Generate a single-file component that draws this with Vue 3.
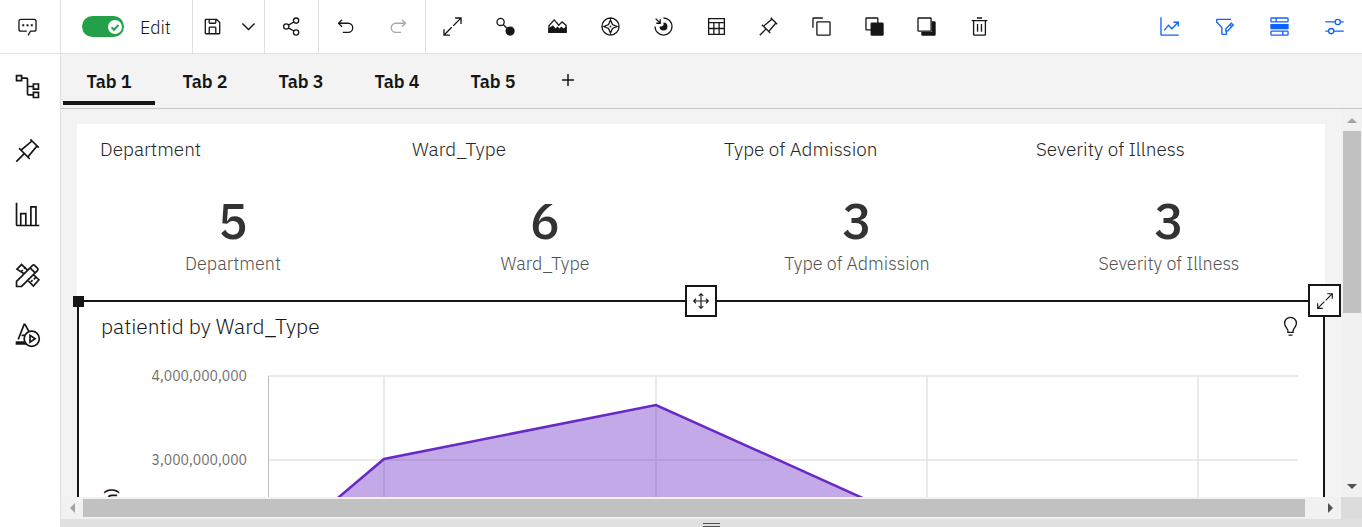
<script setup>
import { ref } from 'vue'

const editing = ref(true)
const activeTab = ref(0)
const tabs = ['Tab 1', 'Tab 2', 'Tab 3', 'Tab 4', 'Tab 5']
const kpis = [
  { name: 'Department', value: 5 },
  { name: 'Ward_Type', value: 6 },
  { name: 'Type of Admission', value: 3 },
  { name: 'Severity of Illness', value: 3 },
]

// Each icon lives on a 32-unit grid: f = filled shapes, s = stroked lines
const icons = {
  chat: {
    f: 'M17.740 30 16 29l4-7h6a2 2 0 0 0 2-2V8a2 2 0 0 0-2-2H6a2 2 0 0 0-2 2v12a2 2 0 0 0 2 2h9v2H6a4 4 0 0 1-4-4V8a4 4 0 0 1 4-4h20a4 4 0 0 1 4 4v12a4 4 0 0 1-4 4h-4.840ZM8 12.500h3v3H8zM14.500 12.500h3v3h-3zM21 12.500h3v3h-3z',
  },
  save: {
    f: 'M27.710 9.290l-5-5A1 1 0 0 0 22 4H6A2 2 0 0 0 4 6V26a2 2 0 0 0 2 2H26a2 2 0 0 0 2-2V10a1 1 0 0 0-.29-.71ZM12 6h8v4H12Zm8 20H12V18h8Zm2 0V18a2 2 0 0 0-2-2H12a2 2 0 0 0-2 2v8H6V6h4v4a2 2 0 0 0 2 2h8a2 2 0 0 0 2-2V6.410l4 4V26Z',
  },
  chevron: { f: 'M16 22 6 12l1.400-1.400 8.600 8.600 8.600-8.600L26 12z' },
  share: {
    s: 'M27 7a4 4 0 1 1-8 0a4 4 0 1 1 8 0M27 25a4 4 0 1 1-8 0a4 4 0 1 1 8 0M12 16a4 4 0 1 1-8 0a4 4 0 1 1 8 0M11.500 14l8-4.800M11.500 18l8 4.800',
  },
  undo: {
    f: 'M20 10H7.815l3.587-3.586L10 5l-6 6 6 6 1.402-1.415L7.818 12H20a6 6 0 0 1 0 12h-8v2h8a8 8 0 0 0 0-16Z',
  },
  redo: {
    f: 'M12 10h12.185l-3.587-3.586L22 5l6 6-6 6-1.402-1.415L24.182 12H12a6 6 0 0 0 0 12h8v2h-8a8 8 0 0 1 0-16Z',
  },
  expand: {
    f: 'M20 2v2h6.586L16.500 14.086l1.414 1.414L28 5.414V12h2V2H20ZM15.500 17.916 14.092 16.500 4 26.586V20H2v10h10v-2H5.414z',
  },
  link: {
    f: 'M30 23a7 7 0 1 1-14 0a7 7 0 1 1 14 0',
    s: 'M14 9a5.500 5.500 0 1 1-11 0a5.500 5.500 0 1 1 11 0M12.500 13l6 6',
  },
  image: {
    f: 'M2 19l7-5 4 5 3-3 3 3 3-3 3 3 5-3v10H2z',
    s: 'M3 25V15l8-9 7 8 5-5 6 5v11',
  },
  compass: {
    f: 'M14.800 14.800h2.400v2.400h-2.400z',
    s: 'M29 16a13 13 0 1 1-26 0a13 13 0 1 1 26 0M16 6l3 7 7 3-7 3-3 7-3-7-7-3 7-3z',
  },
  focus: {
    f: 'M16 10a6 6 0 1 1-6 6h3l3-2z',
    s: 'M16 3a13 13 0 1 1-13 13M4 4l7 7M11 5v6H5',
  },
  table: { s: 'M4 4h24v24H4zM4 10h24M4 19h24M12 10v18M20 10v18' },
  pin: {
    f: 'M28.586 13.314 30 11.900 20 2l-1.314 1.415 1.186 1.186L8.380 14.322l-1.716-1.715L5.250 14l5.657 5.677L2 28.583 3.410 30l8.911-8.909L18 26.748l1.393-1.414-1.716-1.716 9.724-11.490ZM16.251 22.188 9.807 15.750l11.490-9.724 4.678 4.677Z',
  },
  copy: { s: 'M10 9h18a1 1 0 0 1 1 1v18a1 1 0 0 1-1 1H10a1 1 0 0 1-1-1V10a1 1 0 0 1 1-1zM3 18V4a1 1 0 0 1 1-1h14' },
  front: {
    f: 'M12 10h16a2 2 0 0 1 2 2v16a2 2 0 0 1-2 2H12a2 2 0 0 1-2-2V12a2 2 0 0 1 2-2z',
    s: 'M11 21H4a1 1 0 0 1-1-1V4a1 1 0 0 1 1-1h16a1 1 0 0 1 1 1v7',
  },
  back: {
    f: 'M24 8h4a2 2 0 0 1 2 2v18a2 2 0 0 1-2 2H10a2 2 0 0 1-2-2v-4h16z',
    s: 'M4 3h18a1 1 0 0 1 1 1v18a1 1 0 0 1-1 1H4a1 1 0 0 1-1-1V4a1 1 0 0 1 1-1z',
  },
  trash: {
    f: 'M12 12h2v12h-2zM18 12h2v12h-2zM4 6v2h2v20a2 2 0 0 0 2 2h16a2 2 0 0 0 2-2V8h2V6zM8 28V8h16v20zM12 2h8v2h-8z',
  },
  trend: { s: 'M3 2v26a1 1 0 0 0 1 1h26M8 22l6.500-8 5 5.500L29 10M22 9.500h7.500V16' },
  filter: {
    s: 'M26 5H5a1 1 0 0 0-1 1v3l8 8.500V27a1 1 0 0 0 1 1h5a1 1 0 0 0 1-1v-3M18 23v-3.500L26.500 11l2.800 2.800L21 22.500zM24 13.500l3 3',
  },
  rows: {
    f: 'M3 12h26a1 1 0 0 1 1 1v6a1 1 0 0 1-1 1H3a1 1 0 0 1-1-1v-6a1 1 0 0 1 1-1z',
    s: 'M4 3h24a1 1 0 0 1 1 1v4a1 1 0 0 1-1 1H4a1 1 0 0 1-1-1V4a1 1 0 0 1 1-1zM11 3v6M4 23h24a1 1 0 0 1 1 1v4a1 1 0 0 1-1 1H4a1 1 0 0 1-1-1v-4a1 1 0 0 1 1-1zM21 23v6',
  },
  sliders: { s: 'M2 9h15M25 9h5M25 9a4 4 0 1 1-8 0a4 4 0 1 1 8 0M2 23h5M15 23h15M15 23a4 4 0 1 1-8 0a4 4 0 1 1 8 0' },
  tree: { s: 'M3 3h6v6H3zM23 13h6v6h-6zM23 23h6v6h-6zM9 6h6a1 1 0 0 1 1 1v18a1 1 0 0 0 1 1h6M16 16h7' },
  bars: { s: 'M3 2v26a1 1 0 0 0 1 1h26M8 29V15h6v14M20 29V7h6v22' },
  tools: {
    s: 'M3 29v-6L22 4a2 2 0 0 1 2.500 0L28 7.500a2 2 0 0 1 0 2.500L9 29zM19 7l6 6M12 14L3.500 8.500 9 3l7 6.500M10.500 9.500L8 12M14 6l-2 2M23 15l6.500 6L23 28.500l-6-6M26 18l-2.500 2.500M22 21.500l-2 2',
  },
  shapes: {
    f: 'M2 24h11l3 4H2z',
    s: 'M5 22L12 4h1l5 9M9 17h5M30 21a9 9 0 1 1-18 0a9 9 0 1 1 18 0M19 17v8l6-4z',
  },
  move: { s: 'M16 3v26M3 16h26M12 7l4-4 4 4M12 25l4 4 4-4M7 12l-4 4 4 4M25 12l4 4-4 4' },
  bulb: {
    s: 'M11 25h10M13 29h6M12 25v-3c0-3-5-5-5-11a9 9 0 0 1 18 0c0 6-5 8-5 11v3',
  },
}

const tools = [
  ['expand', 'Maximize'], ['link', 'Connect'], ['image', 'Media'], ['compass', 'Navigate'],
  ['focus', 'Focus'], ['table', 'Data table'], ['pin', 'Pin'], ['copy', 'Duplicate'],
  ['front', 'Bring to front'], ['back', 'Send to back'], ['trash', 'Delete'],
]
const panels = [['trend', 'Visualizations'], ['filter', 'Filters'], ['rows', 'Fields'], ['sliders', 'Properties']]
const side = [['tree', 'Sources'], ['pin', 'Pins'], ['bars', 'Charts'], ['tools', 'Widgets'], ['shapes', 'Shapes']]
</script>

<template>
  <div class="app">
    <header class="topbar">
      <button class="chat" aria-label="Comments">
        <svg class="icon" viewBox="0 0 32 32"><path class="f" :d="icons.chat.f" /></svg>
      </button>
      <label class="group edit">
        <input v-model="editing" class="toggle-input" type="checkbox" />
        <span class="toggle">
          <svg viewBox="0 0 14 14"><circle cx="7" cy="7" r="7" /><path d="M3.500 7.200l2.500 2.500 4.500-4.700" /></svg>
        </span>
        <span>Edit</span>
      </label>
      <div class="group">
        <button class="save" aria-label="Save">
          <svg class="icon" viewBox="0 0 32 32"><path class="f" :d="icons.save.f" /></svg>
        </button>
        <button class="more" aria-label="Save options">
          <svg class="icon" viewBox="0 0 32 32"><path class="f" :d="icons.chevron.f" /></svg>
        </button>
      </div>
      <div class="group">
        <button class="tool" aria-label="Share">
          <svg class="icon" viewBox="0 0 32 32"><path class="s" :d="icons.share.s" /></svg>
        </button>
      </div>
      <div class="group">
        <button class="tool" aria-label="Undo">
          <svg class="icon" viewBox="0 0 32 32"><path class="f" :d="icons.undo.f" /></svg>
        </button>
        <button class="tool" aria-label="Redo" disabled>
          <svg class="icon" viewBox="0 0 32 32"><path class="f" :d="icons.redo.f" /></svg>
        </button>
      </div>
      <div class="tools">
        <button v-for="[id, label] in tools" :key="id" :aria-label="label">
          <svg class="icon" viewBox="0 0 32 32">
            <path v-if="icons[id].f" class="f" :d="icons[id].f" />
            <path v-if="icons[id].s" class="s" :d="icons[id].s" />
          </svg>
        </button>
      </div>
      <div class="panels">
        <button v-for="[id, label] in panels" :key="id" class="panel" :aria-label="label">
          <svg class="icon" viewBox="0 0 32 32">
            <path v-if="icons[id].f" class="f" :d="icons[id].f" />
            <path v-if="icons[id].s" class="s" :d="icons[id].s" />
          </svg>
        </button>
      </div>
    </header>

    <nav class="sidebar" aria-label="Panels">
      <button v-for="[id, label] in side" :key="id" :aria-label="label">
        <svg class="icon big" viewBox="0 0 32 32">
          <path v-if="icons[id].f" class="f" :d="icons[id].f" />
          <path v-if="icons[id].s" class="s" :d="icons[id].s" />
        </svg>
      </button>
    </nav>

    <main class="main">
      <div class="tabs" role="tablist">
        <button
          v-for="(tab, i) in tabs"
          :key="tab"
          role="tab"
          class="tab"
          :class="{ active: i === activeTab }"
          :aria-selected="i === activeTab"
          @click="activeTab = i"
        >{{ tab }}</button>
        <button class="add" aria-label="Add tab">
          <svg viewBox="0 0 12 12"><path d="M6 0v12M0 6h12" /></svg>
        </button>
      </div>

      <div class="viewport">
        <div class="scene">
          <section class="kpis">
            <article v-for="k in kpis" :key="k.name" class="kpi">
              <h2>{{ k.name }}</h2>
              <strong>{{ k.value }}</strong>
              <p>{{ k.name }}</p>
            </article>
          </section>

          <section class="chart">
            <span class="handle"></span>
            <button class="float move" aria-label="Move">
              <svg class="icon small" viewBox="0 0 32 32"><path class="s" :d="icons.move.s" /></svg>
            </button>
            <button class="float grow" aria-label="Expand">
              <svg class="icon small" viewBox="0 0 32 32"><path class="f" :d="icons.expand.f" /></svg>
            </button>
            <div class="chart-head">
              <h2>patientid by Ward_Type</h2>
              <button aria-label="Insights">
                <svg class="icon" viewBox="0 0 32 32"><path class="s" :d="icons.bulb.s" /></svg>
              </button>
            </div>
            <div class="chart-body">
              <span class="axis-title">patientid (Sum)</span>
              <div class="ticks"><span>4,000,000,000</span><span>3,000,000,000</span></div>
              <svg class="plot" viewBox="0 0 1030 190" preserveAspectRatio="none">
                <path class="grid" d="M0 1H1030M0 85H1030M116 1V190M388 1V190M659 1V190M930 1V190" />
                <path class="area" d="M0 182L116 84L388 30L659 152V190H0z" />
                <path class="line" d="M0 182L116 84L388 30L659 152" />
                <path class="axis" d="M0.500 1V190" />
              </svg>
            </div>
          </section>
        </div>
      </div>

      <div class="vbar">
        <button aria-label="Scroll up"><svg viewBox="0 0 10 5"><path d="M0 5l5-5 5 5z" /></svg></button>
        <div class="vtrack"><div class="vthumb"></div></div>
        <button class="dark" aria-label="Scroll down"><svg viewBox="0 0 10 5"><path d="M0 0l5 5 5-5z" /></svg></button>
      </div>
      <div class="hbar">
        <button aria-label="Scroll left"><svg viewBox="0 0 5 10"><path d="M5 0L0 5l5 5z" /></svg></button>
        <div class="hthumb"></div>
        <button class="dark" aria-label="Scroll right"><svg viewBox="0 0 5 10"><path d="M0 0l5 5-5 5z" /></svg></button>
      </div>
      <div class="corner"></div>
      <footer class="drawer"><span></span></footer>
    </main>
  </div>
</template>

<style>
body { background: #fff; overflow: hidden; }
</style>

<style scoped>
* { box-sizing: border-box; }
.app {
  display: grid;
  grid-template: 54px 1fr / 61px 1fr;
  height: 100vh;
  color: #161616;
  font-family: "IBM Plex Sans", "Open Sans", sans-serif;
}
button {
  display: flex;
  align-items: center;
  justify-content: center;
  padding: 0;
  border: 0;
  background: none;
  color: inherit;
  font: inherit;
}
h2, p { margin: 0; font-weight: 300; }
svg { display: block; }
.icon { width: 21px; height: 21px; }
.icon.big { width: 27px; height: 27px; }
.icon.small { width: 18px; height: 18px; }
.f { fill: currentColor; fill-rule: evenodd; }
.s { fill: none; stroke: currentColor; stroke-width: 2; }

.topbar {
  grid-column: 1 / -1;
  display: flex;
  border-bottom: 1px solid #e0e0e0;
  background: #fff;
}
.chat { width: 61px; padding-right: 6px; border-right: 1px solid #e0e0e0; }
.group { display: flex; border-right: 1px solid #e0e0e0; }
.edit {
  position: relative;
  align-items: center;
  gap: 16px;
  width: 132px;
  padding: 2px 0 0 21px;
  font-size: 18px;
  font-weight: 300;
}
.toggle-input { position: absolute; width: 42px; height: 21px; margin: 0; opacity: 0; }
.toggle {
  display: flex;
  align-items: center;
  justify-content: flex-end;
  width: 42px;
  height: 21px;
  margin-bottom: 2px;
  padding-right: 2px;
  border-radius: 11px;
  background: #24a148;
}
.toggle svg { width: 14px; height: 14px; }
.toggle circle { fill: #fff; }
.toggle path { fill: none; stroke: #24a148; stroke-width: 2; }
.save { width: 39px; }
.more { width: 32px; }
.tool { width: 53px; }
.tool:disabled { color: #a8a8a8; }
.tools { display: flex; width: 580px; }
.tools button { flex: 1; }
.panels { display: flex; margin-left: auto; color: #0f62fe; }
.panel { width: 55px; }

.sidebar {
  display: flex;
  flex-direction: column;
  border-right: 1px solid #e0e0e0;
  background: #fff;
}
.sidebar button { height: 64px; padding-right: 6px; }
.sidebar button:nth-child(n + 4) { height: 59px; }

.main {
  display: grid;
  grid-template: 55px 1fr 22px 8px / 1fr 21px;
  min-width: 0;
  min-height: 0;
  background: #f3f3f3;
}
.tabs {
  grid-column: 1 / -1;
  display: flex;
  gap: 4px;
  padding: 0 2px 3px;
  border-bottom: 1px solid #c6c6c6;
}
.tab {
  width: 92px;
  padding-top: 8px;
  border-bottom: 4px solid transparent;
  font-size: 18px;
  font-weight: 600;
}
.tab.active { border-color: #161616; }
.add { width: 50px; }
.add svg { width: 12px; height: 12px; stroke: #161616; stroke-width: 1.500; }

.viewport { min-width: 0; overflow: hidden; padding: 15px 16px 0; }
.scene { background: #fff; }
.kpis { display: grid; grid-template-columns: repeat(4, 1fr); height: 176px; }
.kpi { display: flex; flex-direction: column; align-items: center; }
.kpi h2 {
  align-self: flex-start;
  margin: 12px 0 0 23px;
  color: #262626;
  font-size: 19px;
  line-height: 26px;
}
.kpi strong { margin-top: 29px; color: #333; font-size: 50px; font-weight: 500; line-height: 60px; }
.kpi p { color: #525252; font-size: 18px; line-height: 26px; }

.chart { position: relative; height: 420px; border: 2px solid #161616; }
.handle { position: absolute; top: -6px; left: -6px; width: 11px; height: 11px; background: #161616; }
.float {
  position: absolute;
  width: 32px;
  height: 32px;
  border: 2px solid #161616;
  background: #fff;
}
.move { top: -17px; left: calc(50% - 16px); }
.grow { top: -18px; right: -18px; width: 33px; height: 33px; }
.chart-head { display: flex; justify-content: space-between; padding: 8px 22px 0; }
.chart-head h2 { font-size: 21px; font-weight: 300; line-height: 32px; }
.chart-body { display: grid; grid-template-columns: 23px 144px 1fr; padding: 23px 25px 0 22px; }
.axis-title {
  margin-top: 123px;
  writing-mode: vertical-rl;
  transform: rotate(180deg);
  justify-self: start;
  align-self: start;
  font-size: 16px;
  font-weight: 500;
  line-height: 20px;
  white-space: nowrap;
}
.ticks {
  display: flex;
  flex-direction: column;
  gap: 60px;
  margin-top: -1px;
  padding-right: 21px;
  color: #6f6f6f;
  font-size: 14px;
  font-weight: 400;
  line-height: 24px;
  text-align: right;
}
.plot { width: 100%; height: 190px; margin-top: 10px; }
.plot path { vector-effect: non-scaling-stroke; }
.grid { fill: none; stroke: #e4e4e4; stroke-width: 1.500; }
.area { fill: #6929c4; fill-opacity: 0.4; }
.line { fill: none; stroke: #6929c4; stroke-width: 2.500; }
.axis { stroke: #bdbdbd; stroke-width: 1; }

.vbar { display: flex; flex-direction: column; background: #f1f1f1; }
.vbar button { height: 22px; }
.vbar svg { width: 10px; height: 5px; }
.vbar svg, .hbar svg { fill: #a3a3a3; }
.vbar .dark svg, .hbar .dark svg { fill: #505050; }
.vtrack { flex: 1; padding: 0 1px 0 2px; }
.vthumb { height: 53%; background: #c1c1c1; }
.hbar { display: flex; background: #f1f1f1; padding: 2px 0; }
.hbar svg { width: 5px; height: 10px; }
.hbar button { width: 22px; }
.hthumb { flex: 1; margin-right: 14px; background: #c1c1c1; }
.corner { background: #dcdcdc; }
.drawer { grid-column: 1 / -1; display: flex; justify-content: center; background: #e0e0e0; }
.drawer span { width: 17px; height: 4px; margin-top: 4px; border: solid #525252; border-width: 1px 0; }
</style>
